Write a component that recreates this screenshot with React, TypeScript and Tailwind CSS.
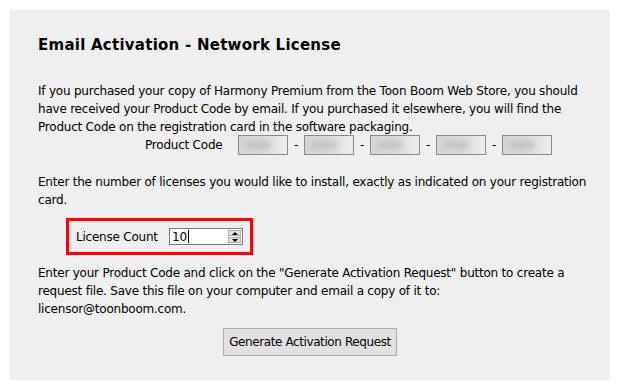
import React from "react";

const font = { fontFamily: '"DejaVu Sans", sans-serif', letterSpacing: "-0.22px" };

function CodeBox() {
  return (
    <div className="relative w-[50px] h-[20px] border border-[#8a8a8a] bg-gradient-to-r from-[#d6d6d6] via-[#dcdcdc] to-[#ededed] overflow-hidden">
      <div className="absolute left-[6px] top-[5px] w-[26px] h-[8px] bg-[#c2c2c2] blur-[3px] rounded" />
    </div>
  );
}

export default function App() {
  return (
    <div className="w-[620px] h-[391px] bg-white p-[10px] text-black whitespace-nowrap" style={font}>
      <div className="w-[600px] h-[370px] bg-[#efefef] pl-[28px] pt-[25px] flex flex-col text-[12px] leading-[18px]">
        <div className="text-[15px] leading-[20px] font-bold tracking-[0.25px]">
          Email Activation - Network License
        </div>
        <div className="mt-[27px]">
          <div>If you purchased your copy of Harmony Premium from the Toon Boom Web Store, you should</div>
          <div>have received your Product Code by email. If you purchased it elsewhere, you will find the</div>
          <div>Product Code on the registration card in the software packaging.</div>
        </div>
        <div className="flex items-center h-[20px] ml-[107px] -mt-px">
          <div className="w-[93px]">Product Code</div>
          <CodeBox />
          <div className="w-[16px] text-center">-</div>
          <CodeBox />
          <div className="w-[16px] text-center">-</div>
          <CodeBox />
          <div className="w-[16px] text-center">-</div>
          <CodeBox />
          <div className="w-[16px] text-center">-</div>
          <CodeBox />
        </div>
        <div className="mt-[18px]">
          <div>Enter the number of licenses you would like to install, exactly as indicated on your registration</div>
          <div>card.</div>
        </div>
        <div className="mt-[9px] ml-[28px] w-[187px] h-[37px] border-[3px] border-[#ff0000] flex items-center pl-[7px]">
          <div className="w-[93px]">License Count</div>
          <div className="w-[74px] h-[17px] border border-[#7a7a7a] bg-white flex items-center">
            <div className="flex-1 flex items-center pl-[2px]">
              <span>10</span>
              <span className="w-px h-[13px] bg-black ml-[1px]" />
            </div>
            <div className="w-[15px] h-full flex flex-col gap-px p-px">
              <div className="flex-1 bg-[#e1e1e1] border border-[#adadad] flex items-center justify-center">
                <div className="w-0 h-0 border-l-[3px] border-r-[3px] border-b-[3px] border-l-transparent border-r-transparent border-b-black" />
              </div>
              <div className="flex-1 bg-[#e1e1e1] border border-[#adadad] flex items-center justify-center">
                <div className="w-0 h-0 border-l-[3px] border-r-[3px] border-t-[3px] border-l-transparent border-r-transparent border-t-black" />
              </div>
            </div>
          </div>
        </div>
        <div className="mt-[9px]">
          <div>Enter your Product Code and click on the "Generate Activation Request" button to create a</div>
          <div>request file. Save this file on your computer and email a copy of it to:</div>
          <div>licensor@toonboom.com.</div>
        </div>
        <div className="mt-[10px] flex justify-center pr-[28px]">
          <div className="w-[174px] h-[28px] border border-[#adadad] bg-[#e1e1e1] flex items-center justify-center tracking-[-0.4px]">
            Generate Activation Request
          </div>
        </div>
      </div>
    </div>
  );
}
